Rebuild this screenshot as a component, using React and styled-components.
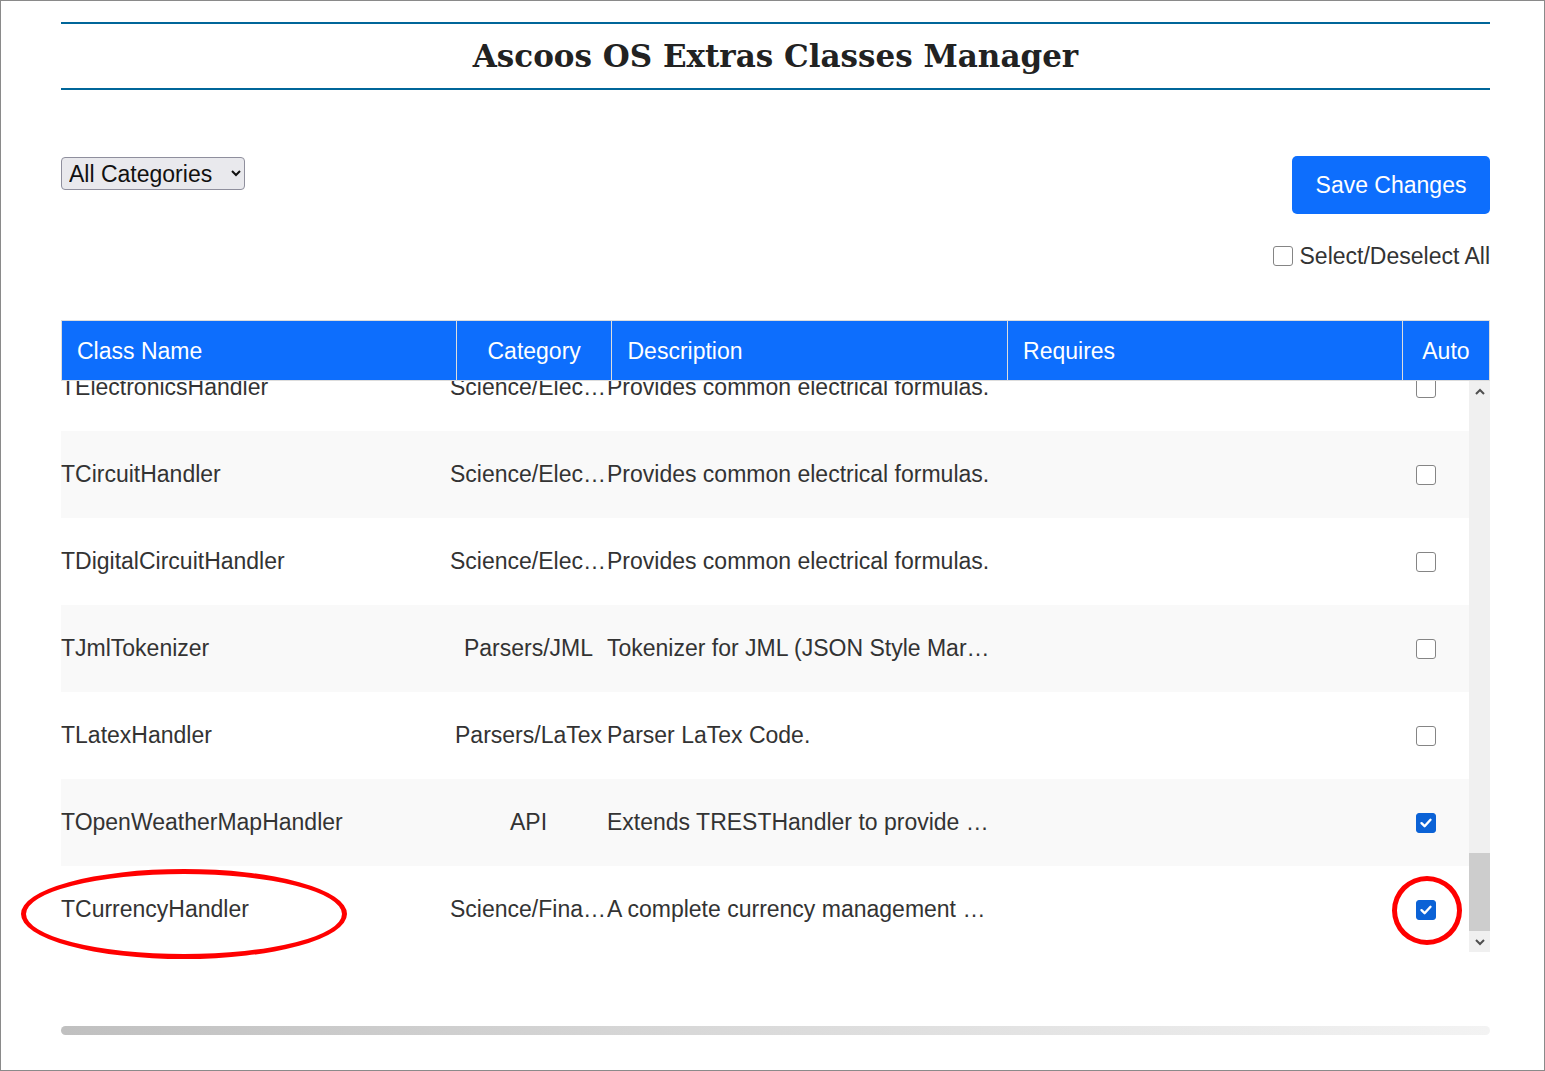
import React, { useLayoutEffect, useRef } from "react";
import styled, { createGlobalStyle } from "styled-components";

const GlobalStyle = createGlobalStyle`
  html, body {
    margin: 0;
    padding: 0;
    background: #fff;
  }
  body {
    font-family: "Liberation Sans", Arial, sans-serif;
    color: #333;
  }
`;

const rows = [
  { name: "TElectronicsHandler", category: "Science/Electronics", desc: "Provides common electrical formulas.", auto: false },
  { name: "TCircuitHandler", category: "Science/Electronics", desc: "Provides common electrical formulas.", auto: false },
  { name: "TDigitalCircuitHandler", category: "Science/Electronics", desc: "Provides common electrical formulas.", auto: false },
  { name: "TJmlTokenizer", category: "Parsers/JML", desc: "Tokenizer for JML (JSON Style Markup Language).", auto: false },
  { name: "TLatexHandler", category: "Parsers/LaTex", desc: "Parser LaTex Code.", auto: false },
  { name: "TOpenWeatherMapHandler", category: "API", desc: "Extends TRESTHandler to provide weather data.", auto: true },
  { name: "TCurrencyHandler", category: "Science/Finance", desc: "A complete currency management class.", auto: true },
];

function CheckBox({ checked }) {
  return (
    <Box checked={checked}>
      {checked && (
        <svg width="14" height="14" viewBox="0 0 14 14">
          <path d="M2.5 7.2 L5.6 10.2 L11.5 3.8" fill="none" stroke="#fff" strokeWidth="2.4" strokeLinecap="round" strokeLinejoin="round" />
        </svg>
      )}
    </Box>
  );
}

function App() {
  const scroller = useRef(null);

  // list is shown scrolled down to its last row
  useLayoutEffect(() => {
    const el = scroller.current;
    if (el) el.scrollTop = el.scrollHeight - el.clientHeight - 1;
  }, []);

  return (
    <>
      <GlobalStyle />
      <Page>
        <TitleBar>
          <Title>Ascoos OS Extras Classes Manager</Title>
        </TitleBar>

        <Toolbar>
          <CategorySelect defaultValue="all">
            <option value="all">All Categories</option>
          </CategorySelect>
          <Actions>
            <SaveButton>Save Changes</SaveButton>
            <SelectAll>
              <CheckBox />
              Select/Deselect All
            </SelectAll>
          </Actions>
        </Toolbar>

        <HeadTable>
          <colgroup>
            <col style={{ width: "27.65%" }} />
            <col style={{ width: "10.9%" }} />
            <col style={{ width: "27.7%" }} />
            <col style={{ width: "27.65%" }} />
            <col style={{ width: "6.1%" }} />
          </colgroup>
          <thead>
            <tr>
              <Th>Class Name</Th>
              <Th center>Category</Th>
              <Th>Description</Th>
              <Th>Requires</Th>
              <Th center>Auto</Th>
            </tr>
          </thead>
        </HeadTable>

        <BodyWrap>
          <Scroller ref={scroller}>
            <BodyTable>
              <colgroup>
                <col style={{ width: "27.63%" }} />
                <col style={{ width: "11.15%" }} />
                <col style={{ width: "27.2%" }} />
                <col style={{ width: "27.9%" }} />
                <col style={{ width: "6.12%" }} />
              </colgroup>
              <tbody>
                {rows.map((r, i) => (
                  <Tr key={r.name} odd={i % 2 === 1}>
                    <Td>{r.name}</Td>
                    <Td center>{r.category}</Td>
                    <Td>{r.desc}</Td>
                    <Td />
                    <Td center tight>
                      <CheckBox checked={r.auto} />
                    </Td>
                  </Tr>
                ))}
              </tbody>
            </BodyTable>
          </Scroller>
          <Scrollbar>
            <Arrow>
              <svg width="12" height="12" viewBox="0 0 12 12">
                <path d="M2 8 L6 4 L10 8" fill="none" stroke="#505050" strokeWidth="2" />
              </svg>
            </Arrow>
            <Track>
              <Thumb />
            </Track>
            <Arrow>
              <svg width="12" height="12" viewBox="0 0 12 12">
                <path d="M2 4 L6 8 L10 4" fill="none" stroke="#505050" strokeWidth="2" />
              </svg>
            </Arrow>
          </Scrollbar>
        </BodyWrap>

        <HScroll />

        <NameMark />
        <AutoMark />
      </Page>
    </>
  );
}

export default App;

const Page = styled.div`
  position: relative;
  box-sizing: border-box;
  width: 1545px;
  height: 1071px;
  border: 1px solid #8a8a8a;
  padding: 0 54px 0 60px;
  overflow: hidden;
`;

const TitleBar = styled.header`
  margin-top: 21px;
  border-top: 2px solid #006699;
  border-bottom: 2px solid #006699;
  height: 64px;
  display: flex;
  align-items: center;
  justify-content: center;
`;

const Title = styled.h1`
  margin: 0;
  font-family: "DejaVu Serif", Georgia, serif;
  font-weight: bold;
  font-size: 31px;
  color: #222;
`;

const Toolbar = styled.div`
  display: flex;
  justify-content: space-between;
  align-items: flex-start;
  margin-top: 66px;
`;

const CategorySelect = styled.select`
  margin-top: 1px;
  width: 184px;
  height: 33px;
  padding: 0 3px;
  font-family: "Liberation Sans", Arial, sans-serif;
  font-size: 23px;
  color: #111;
  background: #e9e9ed;
  border: 1px solid #8f8f9d;
  border-radius: 4px;
`;

const Actions = styled.div`
  display: flex;
  flex-direction: column;
  align-items: flex-end;
`;

const SaveButton = styled.button`
  width: 198px;
  height: 58px;
  border: none;
  border-radius: 5px;
  background: #0d6efd;
  color: #fff;
  font-family: "Liberation Sans", Arial, sans-serif;
  font-size: 23px;
`;

const SelectAll = styled.label`
  margin-top: 31px;
  height: 22px;
  display: flex;
  align-items: center;
  gap: 7px;
  font-size: 23px;
  color: #333;
`;

const Box = styled.span`
  box-sizing: border-box;
  width: 20px;
  height: 20px;
  display: inline-flex;
  align-items: center;
  justify-content: center;
  vertical-align: middle;
  border-radius: 3px;
  border: 1px solid ${(p) => (p.checked ? "#0b62d6" : "#858585")};
  background: ${(p) => (p.checked ? "#0b62d6" : "#fff")};
`;

const HeadTable = styled.table`
  margin-top: 53px;
  width: 100%;
  table-layout: fixed;
  border-collapse: collapse;
  border: 1px solid #ddd;
`;

const Th = styled.th`
  height: 58px;
  padding: 1px 15px 0 15px;
  background: #0d6efd;
  color: #fff;
  font-weight: normal;
  font-size: 23px;
  text-align: ${(p) => (p.center ? "center" : "left")};
  border: 1px solid #ddd;
`;

const BodyWrap = styled.div`
  display: flex;
  height: 571px;
`;

const Scroller = styled.div`
  flex: 1;
  overflow: hidden;
`;

const BodyTable = styled.table`
  width: 100%;
  table-layout: fixed;
  border-collapse: collapse;
`;

const Tr = styled.tr`
  background: ${(p) => (p.odd ? "#f9f9f9" : "#fff")};
`;

const Td = styled.td`
  height: 87px;
  padding: 0;
  font-size: 23px;
  line-height: ${(p) => (p.tight ? "0" : "normal")};
  color: #333;
  white-space: nowrap;
  overflow: hidden;
  text-overflow: ellipsis;
  text-align: ${(p) => (p.center ? "center" : "left")};
  vertical-align: middle;
`;

const Scrollbar = styled.div`
  width: 21px;
  display: flex;
  flex-direction: column;
  background: #f0f0f0;
`;

const Arrow = styled.div`
  height: 21px;
  display: flex;
  align-items: center;
  justify-content: center;
`;

const Track = styled.div`
  flex: 1;
  display: flex;
  flex-direction: column;
  justify-content: flex-end;
`;

const Thumb = styled.div`
  height: 78px;
  background: #cdcdcd;
`;

const HScroll = styled.div`
  margin-top: 74px;
  height: 9px;
  border-radius: 5px;
  background: linear-gradient(90deg, #c0c0c0 0%, #d6d6d6 40%, #f3f3f3 100%);
`;

const NameMark = styled.div`
  position: absolute;
  left: 20px;
  top: 868px;
  width: 316px;
  height: 80px;
  border: 5px solid #ff0000;
  border-radius: 50%;
`;

const AutoMark = styled.div`
  position: absolute;
  left: 1391px;
  top: 875px;
  width: 60px;
  height: 59px;
  border: 5px solid #ff0000;
  border-radius: 50%;
`;
